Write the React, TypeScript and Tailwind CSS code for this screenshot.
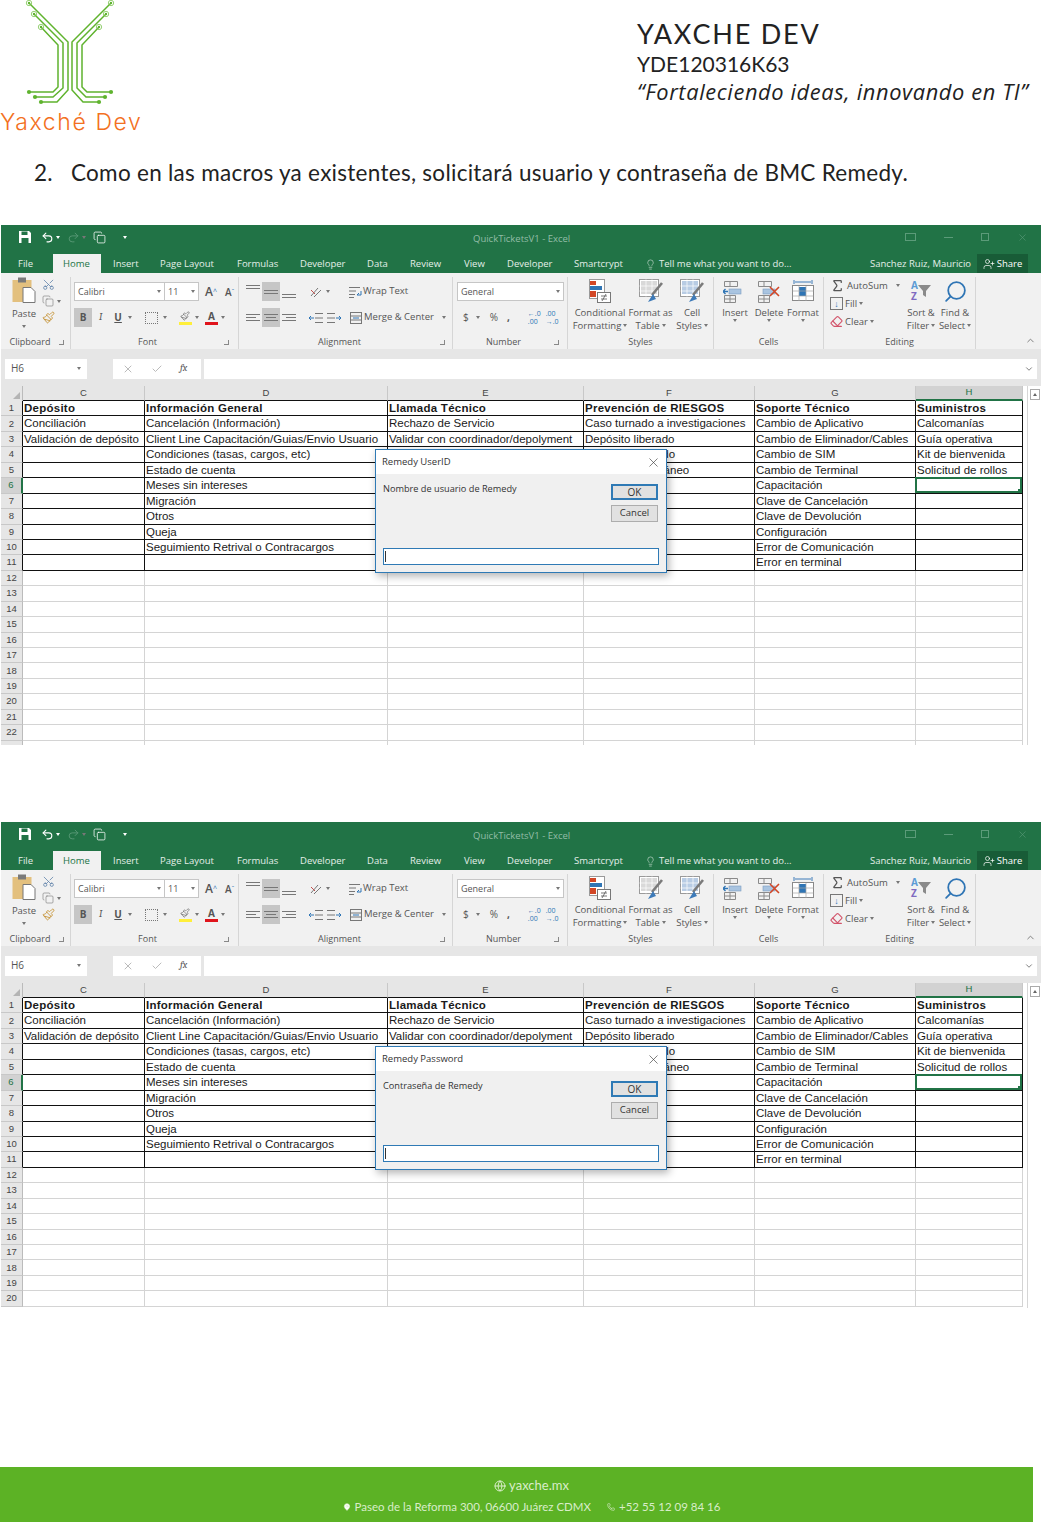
import type { ReactNode } from "react"
import { Check, ChevronDown, ChevronUp, Copy, Eraser, Globe, Lightbulb, MapPin, Paintbrush, Phone, Redo2, Scissors, Search, Sigma, Undo2, UserPlus, X } from "lucide-react"

const sheetRows = [
  ["Depósito", "Información General", "Llamada Técnico", "Prevención de RIESGOS", "Soporte Técnico", "Suministros"],
  ["Conciliación", "Cancelación (Información)", "Rechazo de Servicio", "Caso turnado a investigaciones", "Cambio de Aplicativo", "Calcomanías"],
  ["Validación de depósito", "Client Line Capacitación/Guias/Envio Usuario", "Validar con coordinador/depolyment", "Depósito liberado", "Cambio de Eliminador/Cables", "Guía operativa"],
  ["", "Condiciones (tasas, cargos, etc)", "", "Depósito retenido", "Cambio de SIM", "Kit de bienvenida"],
  ["", "Estado de cuenta", "", "Depósito simultáneo", "Cambio de Terminal", "Solicitud de rollos"],
  ["", "Meses sin intereses", "", "", "Capacitación", ""],
  ["", "Migración", "", "", "Clave de Cancelación", ""],
  ["", "Otros", "", "", "Clave de Devolución", ""],
  ["", "Queja", "", "", "Configuración", ""],
  ["", "Seguimiento Retrival o Contracargos", "", "", "Error de Comunicación", ""],
  ["", "", "", "", "Error en terminal", ""],
]

const tabs = [
  { label: "File", w: "w-[45px]" },
  { label: "Home", w: "w-[48px]" },
  { label: "Insert", w: "w-[47px]" },
  { label: "Page Layout", w: "w-[77px]" },
  { label: "Formulas", w: "w-[63px]" },
  { label: "Developer", w: "w-[67px]" },
  { label: "Data", w: "w-[43px]" },
  { label: "Review", w: "w-[54px]" },
  { label: "View", w: "w-[43px]" },
  { label: "Developer", w: "w-[67px]" },
  { label: "Smartcrypt", w: "w-[71px]" },
]

const columns = [
  { label: "C", w: "w-[122px]" },
  { label: "D", w: "w-[243px]" },
  { label: "E", w: "w-[196px]" },
  { label: "F", w: "w-[171px]" },
  { label: "G", w: "w-[161px]" },
  { label: "H", w: "w-[107px]" },
]

function Logo() {
  const traces = [
    "M29 3 L68 42 V90 L57 102 H41",
    "M34 14 L63 43 V88 L53 97 H35",
    "M41 27 L58 45 V87 L53 92 H29",
    "M111 3 L72 42 V90 L83 102 H99",
    "M106 14 L77 43 V88 L86 97 H105",
    "M99 27 L82 45 V87 L87 92 H111",
  ]
  const rings = [[29, 3], [34, 14], [41, 27], [111, 3], [106, 14], [99, 27]]
  const dots = [[41, 102], [35, 97], [29, 92], [99, 102], [105, 97], [111, 92]]
  return (
    <svg width="142" height="110" viewBox="0 0 142 110" fill="none">
      {traces.map((d) => (
        <path key={d} d={d} stroke="#5fb32e" strokeWidth="1.5" />
      ))}
      {rings.map(([x, y]) => (
        <g key={`${x}-${y}`}>
          <circle cx={x} cy={y} r="2.7" stroke="#8ccb66" strokeWidth="0.9" />
          <circle cx={x} cy={y} r="1.2" fill="#5fb32e" />
        </g>
      ))}
      {dots.map(([x, y]) => (
        <circle key={`${x}-${y}`} cx={x} cy={y} r="2.1" fill="#5fb32e" />
      ))}
    </svg>
  )
}

function Caret({ className = "" }: { className?: string }) {
  return <span className={`inline-block h-0 w-0 border-x-[2.5px] border-t-[3px] border-x-transparent border-t-[#777] ${className}`} />
}

function Lines({ rows }: { rows: string[] }) {
  return (
    <div className="flex w-[14px] flex-col gap-[2px]">
      {rows.map((c, i) => (
        <div key={i} className={`h-px bg-[#777] ${c}`} />
      ))}
    </div>
  )
}

function Group({ w, label, labelClass = "", launcher = true, children }: { w: string; label: string; labelClass?: string; launcher?: boolean; children: ReactNode }) {
  return (
    <div className={`${w} flex h-[72px] shrink-0 flex-col border-r border-[#d6d6d6]`}>
      <div className="h-[58px] overflow-hidden">{children}</div>
      <div className={`flex h-[14px] items-center text-[9px] ${labelClass}`}>
        <span className="flex-1 text-center">{label}</span>
        {launcher && <span className="mr-[4px] h-[5px] w-[5px] border-b border-r border-[#888]" />}
      </div>
    </div>
  )
}

function StyleIcon({ tone }: { tone: string }) {
  return (
    <svg width="26" height="26" viewBox="0 0 26 26" fill="none">
      <rect x="1.5" y="1.5" width="19" height="17" fill="#fff" stroke="#9a9a9a" />
      <rect x="3" y="3" width="16" height="13" fill={tone} />
      <path d="M8 1.5v17M14 1.5v17M1.5 8h19M1.5 13h19" stroke="#fff" strokeWidth=".7" />
      <path d="M24 5 L14 17" stroke="#7b7b7b" strokeWidth="2.6" />
      <path d="M15 16 L10 24 L18 21 Z" fill="#3d7ab8" />
    </svg>
  )
}

function BigButton({ w, icon, top, bottom }: { w: string; icon: ReactNode; top: string; bottom: ReactNode }) {
  return (
    <div className={`${w} flex shrink-0 flex-col items-center`}>
      <div className="flex h-[28px] items-center">{icon}</div>
      <div className="mt-px whitespace-nowrap text-[9.5px] leading-[13px]">{top}</div>
      <div className="flex items-center gap-[2px] whitespace-nowrap text-[9.5px] leading-[13px]">{bottom}</div>
    </div>
  )
}

function CellIcon({ kind }: { kind: "insert" | "delete" | "format" }) {
  if (kind === "format") {
    return (
      <svg width="24" height="27" viewBox="0 0 24 27" fill="none">
        <path d="M3 2v4M21 2v4M4 4h16" stroke="#3d7ab8" />
        <rect x="1.5" y="7.5" width="21" height="15" fill="#fff" stroke="#8a8a8a" />
        <rect x="8" y="9" width="7" height="9" fill="#2f75b5" />
        <path d="M1.5 13h21M1.5 18h21M8 8v15M15 8v15" stroke="#a8a8a8" strokeWidth=".7" />
      </svg>
    )
  }
  return (
    <svg width="24" height="27" viewBox="0 0 24 27" fill="none">
      <path d="M1.5 3.5h13v5h-13zM1.5 17.5h11v7h-11zM7 3.5v5M7 17.5v7M1.5 21h11" stroke="#8a8a8a" />
      <rect x="6" y="11" width="12" height="5" fill="#a9c4e0" stroke="#7b9cc0" strokeWidth=".6" />
      {kind === "insert" ? <path d="M5 13.5H0M2.5 11 0 13.5 2.5 16" stroke="#2f75b5" strokeWidth="1.3" /> : <path d="m13 9 9 9M22 9l-9 9" stroke="#d24726" strokeWidth="1.6" />}
    </svg>
  )
}

function Ribbon() {
  return (
    <div className="flex h-[76px] items-start bg-[#f1f1f1] pt-[4px] font-['Open_Sans',sans-serif] text-[#555]">
      <Group w="w-[70px]" label="Clipboard" labelClass="pr-[2px]">
        <div className="flex pl-[10px]">
          <div className="flex w-[26px] flex-col items-center">
            <svg width="24" height="26" viewBox="0 0 24 26" fill="none">
              <rect x="0.5" y="3" width="19" height="22" fill="#e3c07e" />
              <rect x="6" y="0.5" width="8" height="5" fill="#7a7a7a" />
              <path d="M11 10.5h8l4 4v11H11z" fill="#fff" stroke="#777" />
            </svg>
            <span className="mt-[5px] text-[9.5px] leading-[12px]">Paste</span>
            <Caret className="mt-[5px]" />
          </div>
          <div className="ml-[5px] flex flex-col items-start gap-[4px] pt-[1px]">
            <Scissors size={13} strokeWidth={1.4} className="-rotate-90 text-[#5b7fa8]" />
            <div className="flex items-center gap-[3px]">
              <Copy size={12} strokeWidth={1.2} className="text-[#777]" />
              <Caret />
            </div>
            <Paintbrush size={13} strokeWidth={1.8} className="text-[#c99a45]" />
          </div>
        </div>
      </Group>

      <Group w="w-[168px]" label="Font" labelClass="pr-[5px]">
        <div className="pl-[3px] pt-[5px]">
          <div className="flex h-[19px] items-center">
            <div className="flex h-[19px] w-[91px] items-center justify-between border border-[#c6c6c6] bg-white px-[3px] text-[9px]">
              Calibri
              <Caret />
            </div>
            <div className="flex h-[19px] w-[34px] items-center justify-between border border-l-0 border-[#c6c6c6] bg-white px-[3px] text-[9px]">
              11
              <Caret />
            </div>
            <span className="ml-[6px] text-[12px] font-semibold leading-none">A</span>
            <span className="text-[7px] leading-none text-[#2f75b5]">^</span>
            <span className="ml-[8px] text-[10px] font-semibold leading-none">A</span>
            <span className="text-[7px] leading-none text-[#2f75b5]">ˇ</span>
          </div>
          <div className="mt-[7px] flex h-[19px] items-center">
            <div className="flex h-[19px] w-[18px] items-center justify-center bg-[#c6c6c6] text-[10px] font-bold">B</div>
            <span className="ml-[7px] font-serif text-[10px] italic">I</span>
            <span className="ml-[12px] text-[10px] font-bold underline">U</span>
            <Caret className="ml-[6px]" />
            <span className="ml-[13px] h-[12px] w-[13px] border border-dotted border-[#777]" />
            <Caret className="ml-[5px]" />
            <div className="ml-[12px] flex w-[13px] flex-col items-center">
              <Paintbrush size={10} strokeWidth={1.4} />
              <span className="mt-[1px] h-[3px] w-[13px] bg-[#ffef3a]" />
            </div>
            <Caret className="ml-[3px]" />
            <div className="ml-[6px] flex w-[13px] flex-col items-center text-[10px] font-bold leading-[10px]">
              A
              <span className="mt-[1px] h-[3px] w-[13px] bg-[#e0141c]" />
            </div>
            <Caret className="ml-[3px]" />
          </div>
        </div>
      </Group>

      <Group w="w-[214px]" label="Alignment" labelClass="pr-[3px]">
        <div className="pl-[5px] pt-[5px]">
          <div className="flex h-[19px] items-center">
            <div className="flex h-[19px] w-[18px] items-start justify-center pt-[3px]"><Lines rows={["", ""]} /></div>
            <div className="flex h-[19px] w-[18px] items-center justify-center bg-[#c6c6c6]"><Lines rows={["", ""]} /></div>
            <div className="flex h-[19px] w-[18px] items-end justify-center pb-[3px]"><Lines rows={["", ""]} /></div>
            <svg className="ml-[11px]" width="14" height="14" viewBox="0 0 14 14" fill="none"><path d="M2 11 9 3M5 12l7-7" stroke="#777" /><path d="M2 5l4 4" stroke="#c0504d" /></svg>
            <Caret className="ml-[3px]" />
            <svg className="ml-[18px]" width="14" height="14" viewBox="0 0 14 14" fill="none"><path d="M1 2.5h11M1 6h7M1 9.5h6M1 12.5h5" stroke="#777" /><path d="M9 10h4V6M9 10l2-2" stroke="#2f75b5" /></svg>
            <span className="ml-[1px] text-[9.5px]">Wrap Text</span>
          </div>
          <div className="mt-[7px] flex h-[19px] items-center">
            <div className="flex h-[19px] w-[18px] items-center justify-center"><Lines rows={["", "w-[10px]", ""]} /></div>
            <div className="flex h-[19px] w-[18px] items-center justify-center bg-[#c6c6c6]"><Lines rows={["", "mx-[2px]", ""]} /></div>
            <div className="flex h-[19px] w-[18px] items-center justify-center"><Lines rows={["", "ml-[4px]", ""]} /></div>
            <svg className="ml-[11px]" width="14" height="12" viewBox="0 0 14 12" fill="none"><path d="M6 1.5h8M6 6h8M6 10.5h8" stroke="#777" /><path d="M5 6H0M2 4 0 6l2 2" stroke="#2f75b5" /></svg>
            <svg className="ml-[4px]" width="14" height="12" viewBox="0 0 14 12" fill="none"><path d="M0 1.5h8M0 6h8M0 10.5h8" stroke="#777" /><path d="M9 6h5M12 4l2 2-2 2" stroke="#2f75b5" /></svg>
            <svg className="ml-[8px]" width="14" height="14" viewBox="0 0 14 14" fill="none"><rect x="1.5" y="1.5" width="11" height="11" stroke="#777" /><path d="M1.5 5h11M1.5 9h11" stroke="#777" /><path d="M4 7h6" stroke="#2f75b5" /></svg>
            <span className="ml-[1px] text-[9.5px]">Merge &amp; Center</span>
            <Caret className="ml-[8px]" />
          </div>
        </div>
      </Group>

      <Group w="w-[115px]" label="Number" labelClass="pr-[4px]">
        <div className="pl-[4px] pt-[5px]">
          <div className="flex h-[19px] w-[107px] items-center justify-between border border-[#c6c6c6] bg-white px-[3px] text-[9px]">
            General
            <Caret />
          </div>
          <div className="mt-[7px] flex h-[19px] items-center text-[10px]">
            <span className="ml-[6px]">$</span>
            <Caret className="ml-[7px]" />
            <span className="ml-[10px]">%</span>
            <span className="ml-[9px] font-bold">,</span>
            <span className="ml-[18px] text-[7px] leading-[8px] text-[#2f75b5]">←.0<br />.00</span>
            <span className="ml-[5px] text-[7px] leading-[8px] text-[#2f75b5]">.00<br />→.0</span>
          </div>
        </div>
      </Group>

      <Group w="w-[146px]" label="Styles" launcher={false}>
        <div className="flex pl-[4px]">
          <BigButton
            w="w-[56px]"
            icon={
              <svg width="24" height="26" viewBox="0 0 24 26" fill="none">
                <rect x="1.5" y="1.5" width="15" height="19" fill="#fff" stroke="#9a9a9a" />
                <path d="M2 3h6v4H2z" fill="#d24726" /><path d="M2 8h12v4H2z" fill="#2f75b5" /><path d="M2 13h6v6H2z" fill="#d24726" />
                <rect x="9.5" y="14.5" width="13" height="10" fill="#fff" stroke="#777" />
                <path d="M13 18h6M13 21h6M18 16l-4 7" stroke="#555" strokeWidth=".8" />
              </svg>
            }
            top="Conditional"
            bottom={<>Formatting <Caret /></>}
          />
          <BigButton w="w-[45px]" icon={<StyleIcon tone="#d9d9d9" />} top="Format as" bottom={<>Table <Caret /></>} />
          <BigButton w="w-[38px]" icon={<StyleIcon tone="#b8cce4" />} top="Cell" bottom={<>Styles <Caret /></>} />
        </div>
      </Group>

      <Group w="w-[110px]" label="Cells" launcher={false}>
        <div className="flex pl-[4px]">
          <BigButton w="w-[34px]" icon={<CellIcon kind="insert" />} top="Insert" bottom={<Caret />} />
          <BigButton w="w-[34px]" icon={<CellIcon kind="delete" />} top="Delete" bottom={<Caret />} />
          <BigButton w="w-[34px]" icon={<CellIcon kind="format" />} top="Format" bottom={<Caret />} />
        </div>
      </Group>

      <Group w="w-[152px]" label="Editing" launcher={false}>
        <div className="flex pl-[6px]">
          <div className="flex w-[74px] flex-col gap-[3px] pt-[1px] text-[9.5px] leading-[15px]">
            <div className="flex items-center gap-[2px]"><Sigma size={15} strokeWidth={2} className="text-[#555]" />AutoSum<Caret className="ml-[6px]" /></div>
            <div className="flex items-center gap-[2px]">
              <span className="flex h-[13px] w-[13px] items-center justify-center border border-[#777] text-[9px] font-bold leading-none text-[#2f75b5]">↓</span>
              Fill <Caret />
            </div>
            <div className="flex items-center gap-[2px]"><Eraser size={13} className="text-[#d2536a]" />Clear <Caret /></div>
          </div>
          <BigButton
            w="w-[34px]"
            icon={
              <div className="flex items-center">
                <div className="flex flex-col text-[10px] font-bold leading-[11px] text-[#7f6ac0]"><span className="text-[#5b9bd5]">A</span><span>Z</span></div>
                <svg width="13" height="14" viewBox="0 0 13 14"><path d="M0 1h13L8 7v6L5 11V7z" fill="#8a8a8a" /></svg>
              </div>
            }
            top="Sort &"
            bottom={<>Filter <Caret /></>}
          />
          <BigButton w="w-[34px]" icon={<Search size={25} strokeWidth={1.7} className="-scale-x-100 text-[#2f75b5]" />} top="Find &" bottom={<>Select <Caret /></>} />
        </div>
      </Group>

      <div className="flex h-[72px] flex-1 items-end justify-end pb-[3px] pr-[5px]">
        <ChevronUp size={11} strokeWidth={2} className="text-[#777]" />
      </div>
    </div>
  )
}

function Dialog({ title, prompt }: { title: string; prompt: string }) {
  return (
    <div className="absolute left-[374px] top-[224px] flex h-[124px] w-[292px] flex-col border border-[#2f7ab5] bg-[#f0f0f0] font-['Open_Sans',sans-serif] text-[#333] shadow-[2px_3px_8px_rgba(0,0,0,0.3)]">
      <div className="flex h-[24px] shrink-0 items-center justify-between bg-white pl-[6px] pr-[5px] text-[9.5px]">
        {title}
        <X size={15} strokeWidth={1} />
      </div>
      <div className="flex h-[61px] shrink-0 justify-between pl-[7px] pr-[8px] pt-[9px] text-[9.2px]">
        <span className="leading-[12px]">{prompt}</span>
        <div className="mt-px flex flex-col gap-[5px]">
          <div className="flex h-[16px] w-[47px] items-center justify-center border-2 border-[#2f7ab5] bg-[#e1e1e1] text-[10px]">OK</div>
          <div className="flex h-[17px] w-[47px] items-center justify-center border border-[#adadad] bg-[#e1e1e1] text-[9.5px]">Cancel</div>
        </div>
      </div>
      <div className="mx-[7px] mt-[13px] flex h-[17px] items-center border border-[#2f7ab5] bg-white pl-[1px]">
        <span className="h-[11px] w-px bg-[#333]" />
      </div>
    </div>
  )
}

function SheetRow({ num, values }: { num: number; values?: string[] }) {
  const filled = num <= 11
  const line = filled ? "border-[#111]" : "border-[#d4d4d4]"
  return (
    <div className="flex h-[15.45px] shrink-0">
      <div className={`flex w-[22px] shrink-0 items-center justify-center border-b border-r text-[9.5px] ${num === 6 ? "border-r-2 border-r-[#217346] bg-[#d2d2d2] text-[#217346]" : "bg-[#e6e6e6] text-[#444]"} border-b-[#c8c8c8] ${num === 6 ? "" : filled ? "border-r-[#111]" : "border-r-[#bbb]"}`}>
        {num}
      </div>
      {columns.map((col, i) => {
        const selected = num === 6 && i === 5
        return (
          <div key={col.label} className={`${col.w} relative shrink-0 overflow-visible whitespace-nowrap border-b border-r pl-[1px] text-[11.5px] leading-[14px] text-[#1a1a1a] ${line} ${num === 1 ? "font-bold tracking-[0.25px]" : ""}`}>
            {values?.[i]}
            {selected && (
              <span className="absolute -left-px -top-px h-[16px] w-[107px] border-2 border-[#217346]">
                <span className="absolute -bottom-[2px] -right-[2px] h-[4px] w-[4px] bg-[#217346]" />
              </span>
            )}
          </div>
        )
      })}
    </div>
  )
}

function ExcelWindow({ height, rowCount, title, prompt }: { height: string; rowCount: number; title: string; prompt: string }) {
  return (
    <div className={`${height} relative ml-px w-[1040px] overflow-hidden bg-white font-['Liberation_Sans',sans-serif]`}>
      <div className="flex h-[24px] items-center bg-[#217346] font-['Open_Sans',sans-serif] text-[9.5px] text-[#93bda6]">
        <div className="flex w-[472px] shrink-0 items-center pl-[17px] text-white">
          <svg width="14" height="14" viewBox="0 0 14 14" fill="none">
            <path d="M1 1h10l2 2v10H1z" fill="#fff" />
            <path d="M3.5 1.5h6v3.5h-6z" fill="#217346" />
            <path d="M3.5 8h7v5h-7z" fill="#217346" />
          </svg>
          <Undo2 size={13} strokeWidth={2} className="ml-[9px]" />
          <Caret className="ml-[2px] border-t-white" />
          <Redo2 size={13} strokeWidth={1.6} className="ml-[7px] text-[#5b9b79]" />
          <Caret className="ml-[2px] border-t-[#5b9b79]" />
          <Copy size={13} strokeWidth={1.4} className="ml-[7px]" />
          <Caret className="ml-[17px] border-t-white" />
        </div>
        <div className="w-[432px] shrink-0 pt-[5px]">QuickTicketsV1 - Excel</div>
        <div className="flex items-center gap-[28px] text-[#5b9b79]">
          <span className="h-[8px] w-[11px] border border-[#5b9b79]" />
          <span className="h-px w-[9px] bg-[#5b9b79]" />
          <span className="h-[8px] w-[8px] border border-[#5b9b79]" />
          <X size={11} strokeWidth={1.3} />
        </div>
      </div>

      <div className="flex h-[24px] items-end bg-[#217346] font-['Open_Sans',sans-serif] text-[9.5px] text-[#e4efe9]">
        <div className="w-[7px]" />
        {tabs.map((t) => (
          <div key={t.label + t.w} className={`${t.w} flex h-[19px] shrink-0 items-center pt-[1px] ${t.label === "Home" ? "bg-[#f1f1f1] pl-[10px] text-[#217346]" : t.label === "File" ? "pl-[10px]" : "pl-[12px]"}`}>
            {t.label}
          </div>
        ))}
        <div className="flex h-[19px] w-[237px] shrink-0 items-center gap-[3px] pl-[12px] pt-[1px]">
          <Lightbulb size={11} strokeWidth={1.2} />
          Tell me what you want to do...
        </div>
        <div className="flex h-[19px] w-[107px] shrink-0 items-center pt-[1px]">Sanchez Ruiz, Mauricio</div>
        <div className="flex h-[19px] w-[51px] shrink-0 items-center justify-center gap-[2px] bg-[#185c37] pt-[1px] text-white">
          <UserPlus size={12} strokeWidth={1.4} />
          Share
        </div>
      </div>

      <Ribbon />

      <div className="flex h-[37px] items-center bg-[#e6e6e6] pl-[4px] pr-[4px] pt-[2px] font-['Open_Sans',sans-serif] text-[#555]">
        <div className="flex h-[20px] w-[82px] shrink-0 items-center justify-between bg-white px-[6px] text-[10px]">
          H6
          <Caret className="border-t-[#666]" />
        </div>
        <div className="w-[26px] shrink-0" />
        <div className="flex h-[20px] w-[88px] shrink-0 items-center gap-[17px] bg-white pl-[9px] text-[#bbb]">
          <X size={12} />
          <Check size={12} />
          <span className="font-serif text-[10px] italic text-[#555]">fx</span>
        </div>
        <div className="ml-[3px] flex h-[20px] flex-1 items-center justify-end bg-white pr-[3px]">
          <ChevronDown size={10} strokeWidth={2} className="text-[#666]" />
        </div>
      </div>

      <div className="flex">
        <div className="w-[1022px] shrink-0">
          <div className="flex h-[15px] bg-[#e6e6e6] text-[9.5px] text-[#444]">
            <div className="flex w-[22px] shrink-0 items-end justify-end border-r border-[#bbb] pb-[2px] pr-[2px]">
              <span className="h-0 w-0 border-b-[7px] border-l-[7px] border-b-[#b4b4b4] border-l-transparent" />
            </div>
            {columns.map((c) => (
              <div key={c.label} className={`${c.w} flex shrink-0 items-center justify-center border-r border-[#c8c8c8] ${c.label === "H" ? "border-b-2 border-b-[#217346] bg-[#d2d2d2] text-[#217346]" : "border-b border-b-[#111]"}`}>
                {c.label}
              </div>
            ))}
          </div>
          {Array.from({ length: rowCount }, (_, i) => (
            <SheetRow key={i} num={i + 1} values={sheetRows[i]} />
          ))}
        </div>
        <div className="ml-[4px] flex h-[400px] w-[14px] shrink-0 justify-center border-l border-[#d6d6d6] pt-[3px]">
          <span className="flex h-[11px] w-[10px] items-center justify-center border border-[#aaa] bg-white">
            <span className="h-0 w-0 border-x-[2.5px] border-b-[3px] border-x-transparent border-b-[#666]" />
          </span>
        </div>
      </div>

      <Dialog title={title} prompt={prompt} />
    </div>
  )
}

export default function App() {
  return (
    <div className="h-[1522px] w-[1041px] overflow-hidden bg-white font-['Lato',sans-serif]">
      <div className="flex h-[157px]">
        <div className="w-[142px] shrink-0">
          <Logo />
          <div className="-mt-[1px] whitespace-nowrap font-['Inter',sans-serif] text-[23px] font-light leading-[26px] tracking-[1.6px] text-[#f37021]">Yaxché Dev</div>
        </div>
        <div className="ml-[495px] pt-[17px] text-[#222]">
          <div className="text-[27px] leading-[34px] tracking-[1.8px]">YAXCHE DEV</div>
          <div className="-mt-[1px] text-[21px] leading-[28px]">YDE120316K63</div>
          <div className="whitespace-nowrap font-['Open_Sans',sans-serif] text-[21.8px] italic leading-[28px] tracking-[0.63px]">“Fortaleciendo ideas, innovando en TI”</div>
        </div>
      </div>

      <div className="flex h-[32px] items-center pl-[34px] text-[22.5px] tracking-[0.28px] text-[#222]">
        <span className="w-[37px]">2.</span>
        <span className="whitespace-nowrap">Como en las macros ya existentes, solicitará usuario y contraseña de BMC Remedy.</span>
      </div>

      <div className="mt-[36px]">
        <ExcelWindow height="h-[520px]" rowCount={23} title="Remedy UserID" prompt="Nombre de usuario de Remedy" />
      </div>
      <div className="mt-[77px]">
        <ExcelWindow height="h-[486px]" rowCount={20} title="Remedy Password" prompt="Contraseña de Remedy" />
      </div>

      <div className="mt-[159px] flex h-[55px] w-[1033px] flex-col items-center bg-[#5cb225] pl-[30px] pt-[10px] text-[#d9edc9]">
        <div className="flex h-[18px] items-center gap-[3px] text-[13px]">
          <Globe size={12} />
          yaxche.mx
        </div>
        <div className="mt-[3px] flex h-[18px] items-center text-[11.5px]">
          <MapPin size={8} className="mr-[4px]" fill="#fff" />
          Paseo de la Reforma 300, 06600 Juárez CDMX
          <Phone size={8} className="ml-[16px] mr-[4px]" />
          +52 55 12 09 84 16
        </div>
      </div>
    </div>
  )
}
